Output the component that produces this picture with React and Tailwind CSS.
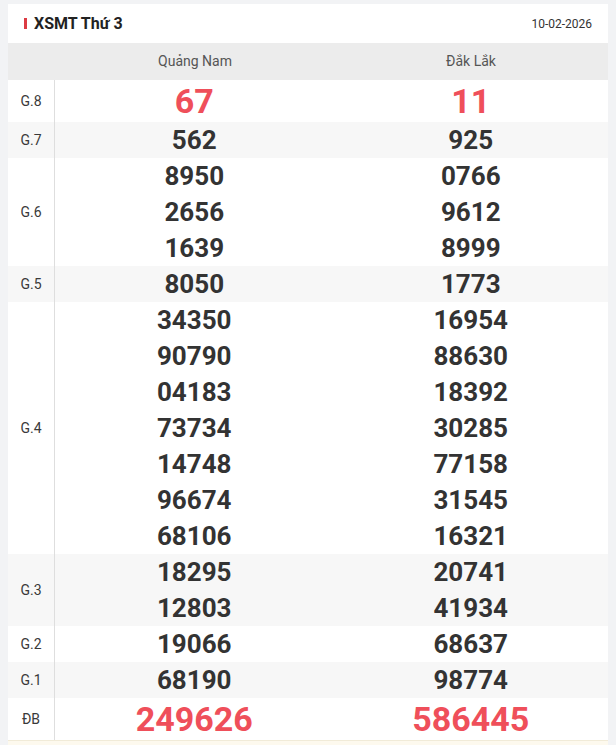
const provinces = ["Quảng Nam", "Đắk Lắk"];

const prizes = [
  { label: "G.8", values: [["67"], ["11"]], big: true },
  { label: "G.7", values: [["562"], ["925"]] },
  { label: "G.6", values: [["8950", "2656", "1639"], ["0766", "9612", "8999"]] },
  { label: "G.5", values: [["8050"], ["1773"]] },
  {
    label: "G.4",
    values: [
      ["34350", "90790", "04183", "73734", "14748", "96674", "68106"],
      ["16954", "88630", "18392", "30285", "77158", "31545", "16321"],
    ],
  },
  { label: "G.3", values: [["18295", "12803"], ["20741", "41934"]] },
  { label: "G.2", values: [["19066"], ["68637"]] },
  { label: "G.1", values: [["68190"], ["98774"]] },
  { label: "ĐB", values: [["249626"], ["586445"]], big: true },
];

const App = () => {
  return (
    <div className="min-h-[745px] bg-[#f2f3f5] px-2 pt-1 font-['Roboto',sans-serif]">
      <div className="bg-white">
        <div className="flex h-[39px] items-center justify-between pl-4 pr-4">
          <div className="flex items-center gap-[7px]">
            <span className="h-[11px] w-[3px] bg-[#dc3b43]" />
            <h2 className="text-[16px] font-bold text-[#222]">XSMT Thứ 3</h2>
          </div>
          <span className="text-[12px] text-[#333]">10-02-2026</span>
        </div>

        <div className="flex h-[37px] items-center bg-[#ececec] text-[14px] text-[#555]">
          <div className="w-[48px]" />
          {provinces.map((name) => (
            <div key={name} className="flex-1 pl-[2px] text-center">
              {name}
            </div>
          ))}
        </div>

        {prizes.map((prize, index) => (
          <div
            key={prize.label}
            className={`flex ${index % 2 === 1 ? "bg-[#f7f7f7]" : "bg-white"}`}
          >
            <div className="flex w-[47px] shrink-0 items-center justify-center border-r border-[#dedede] text-[14px] text-[#3a3a3a]">
              {prize.label}
            </div>
            {prize.values.map((col, colIndex) => (
              <div key={colIndex} className="flex flex-1 flex-col items-center pl-[2px]">
                {col.map((num, numIndex) => (
                  <span
                    key={`${num}-${numIndex}`}
                    className={
                      prize.big
                        ? "text-[34px] leading-[42px] font-bold text-[#ef4f5a]"
                        : "text-[26px] leading-[36px] font-bold text-[#333]"
                    }
                  >
                    {num}
                  </span>
                ))}
              </div>
            ))}
          </div>
        ))}

        <div className="h-[20px] border-t border-[#f1ebd8] bg-[#fdf9ee]" />
      </div>
    </div>
  );
};

export default App;
